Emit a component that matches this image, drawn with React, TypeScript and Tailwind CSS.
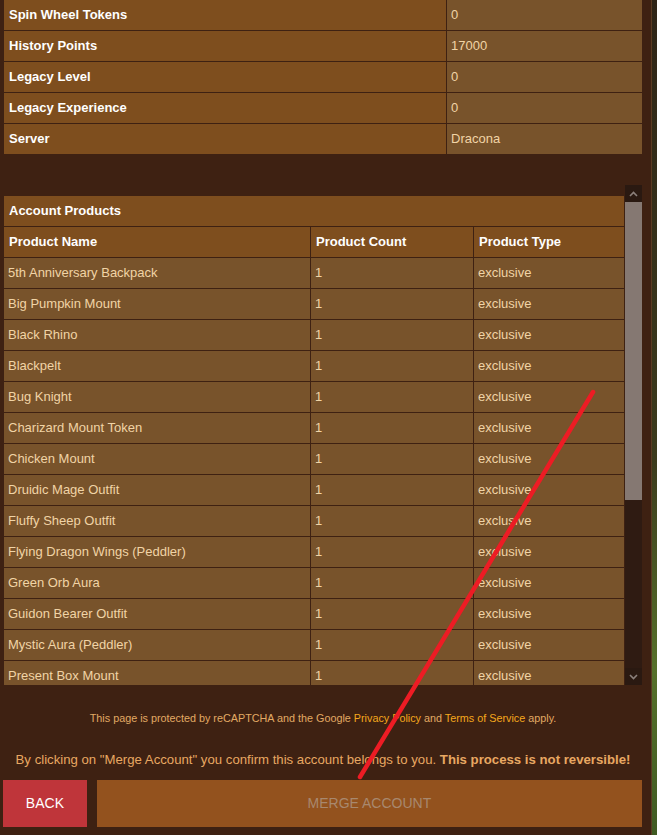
import React from 'react';

const stats: [string, string][] = [
  ['Spin Wheel Tokens', '0'],
  ['History Points', '17000'],
  ['Legacy Level', '0'],
  ['Legacy Experience', '0'],
  ['Server', 'Dracona'],
];

const products = [
  '5th Anniversary Backpack',
  'Big Pumpkin Mount',
  'Black Rhino',
  'Blackpelt',
  'Bug Knight',
  'Charizard Mount Token',
  'Chicken Mount',
  'Druidic Mage Outfit',
  'Fluffy Sheep Outfit',
  'Flying Dragon Wings (Peddler)',
  'Green Orb Aura',
  'Guidon Bearer Outfit',
  'Mystic Aura (Peddler)',
  'Present Box Mount',
];

const head = 'bg-[#7e4e1e] text-white font-bold pl-[5px] flex items-center h-[30px]';
const cell = 'bg-[#78532b] text-[#f1d4a6] pl-[4px] flex items-center h-[30px]';

function Chevron({ up }: { up?: boolean }) {
  return (
    <svg width="9" height="6" viewBox="0 0 9 6" className="block">
      <polyline
        points={up ? '1,5 4.5,1.5 8,5' : '1,1 4.5,4.5 8,1'}
        fill="none"
        stroke="#8b807b"
        strokeWidth="1.6"
      />
    </svg>
  );
}

export default function App() {
  return (
    <div
      className="relative w-[657px] h-[835px] overflow-hidden bg-[linear-gradient(180deg,#2e2416_0%,#3b3a1c_55%,#56702a_80%,#3f5a22_100%)] text-[13px]"
      style={{ fontFamily: '"Liberation Sans", Arial, sans-serif' }}
    >
      <div className="w-[652px] h-full bg-[#3e2112] border-r border-[#5a3b22] pl-[4px] pr-[9px]">
        {/* stats table */}
        <div className="grid grid-cols-[442px_1fr] gap-px">
          {stats.map(([k, v]) => (
            <React.Fragment key={k}>
              <div className={head}>{k}</div>
              <div className={cell}>{v}</div>
            </React.Fragment>
          ))}
        </div>

        {/* products scroll box */}
        <div className="mt-[31px] h-[500px] flex">
          <div className="w-[622px] pt-[11px] overflow-hidden">
            <div className={head + ' mb-px'}>Account Products</div>
            <div className="grid grid-cols-[306px_162px_1fr] gap-px">
              <div className={head}>Product Name</div>
              <div className={head}>Product Count</div>
              <div className={head}>Product Type</div>
              {products.map(p => (
                <React.Fragment key={p}>
                  <div className={cell}>{p}</div>
                  <div className={cell}>1</div>
                  <div className={cell}>exclusive</div>
                </React.Fragment>
              ))}
            </div>
          </div>
          <div className="w-[17px] ml-px flex flex-col bg-[#2f1b12]">
            <div className="h-[17px] flex items-center justify-center bg-[#2a1911]">
              <Chevron up />
            </div>
            <div className="h-[298px] bg-[#857872]" />
            <div className="flex-1" />
            <div className="h-[17px] flex items-center justify-center bg-[#2a1911]">
              <Chevron />
            </div>
          </div>
        </div>

        {/* footer */}
        <p className="mt-[27px] h-[13px] leading-[13px] text-center text-[10.8px] text-[#e2aa64] whitespace-nowrap">
          This page is protected by reCAPTCHA and the Google{' '}
          <span className="text-[#f5a81c]">Privacy Policy</span> and{' '}
          <span className="text-[#f5a81c]">Terms of Service</span> apply.
        </p>
        <p className="mt-[26px] h-[17px] leading-[17px] text-center text-[13.2px] text-[#e8a862] whitespace-nowrap">
          By clicking on "Merge Account" you confirm this account belongs to you.{' '}
          <b>This process is not reversible!</b>
        </p>
        <div className="mt-[12px] flex gap-[10px] -ml-px">
          <button className="w-[84px] h-[47px] bg-[#bf353a] text-white text-[14px]">BACK</button>
          <button className="w-[546px] h-[47px] bg-[#93521e] text-[#a8886e] text-[14px]">MERGE ACCOUNT</button>
        </div>
      </div>

      {/* red annotation stroke */}
      <svg className="absolute inset-0 pointer-events-none" width="657" height="835">
        <line x1="593" y1="392" x2="360" y2="777" stroke="#ed1c24" strokeWidth="4.5" strokeLinecap="round" />
      </svg>
    </div>
  );
}
